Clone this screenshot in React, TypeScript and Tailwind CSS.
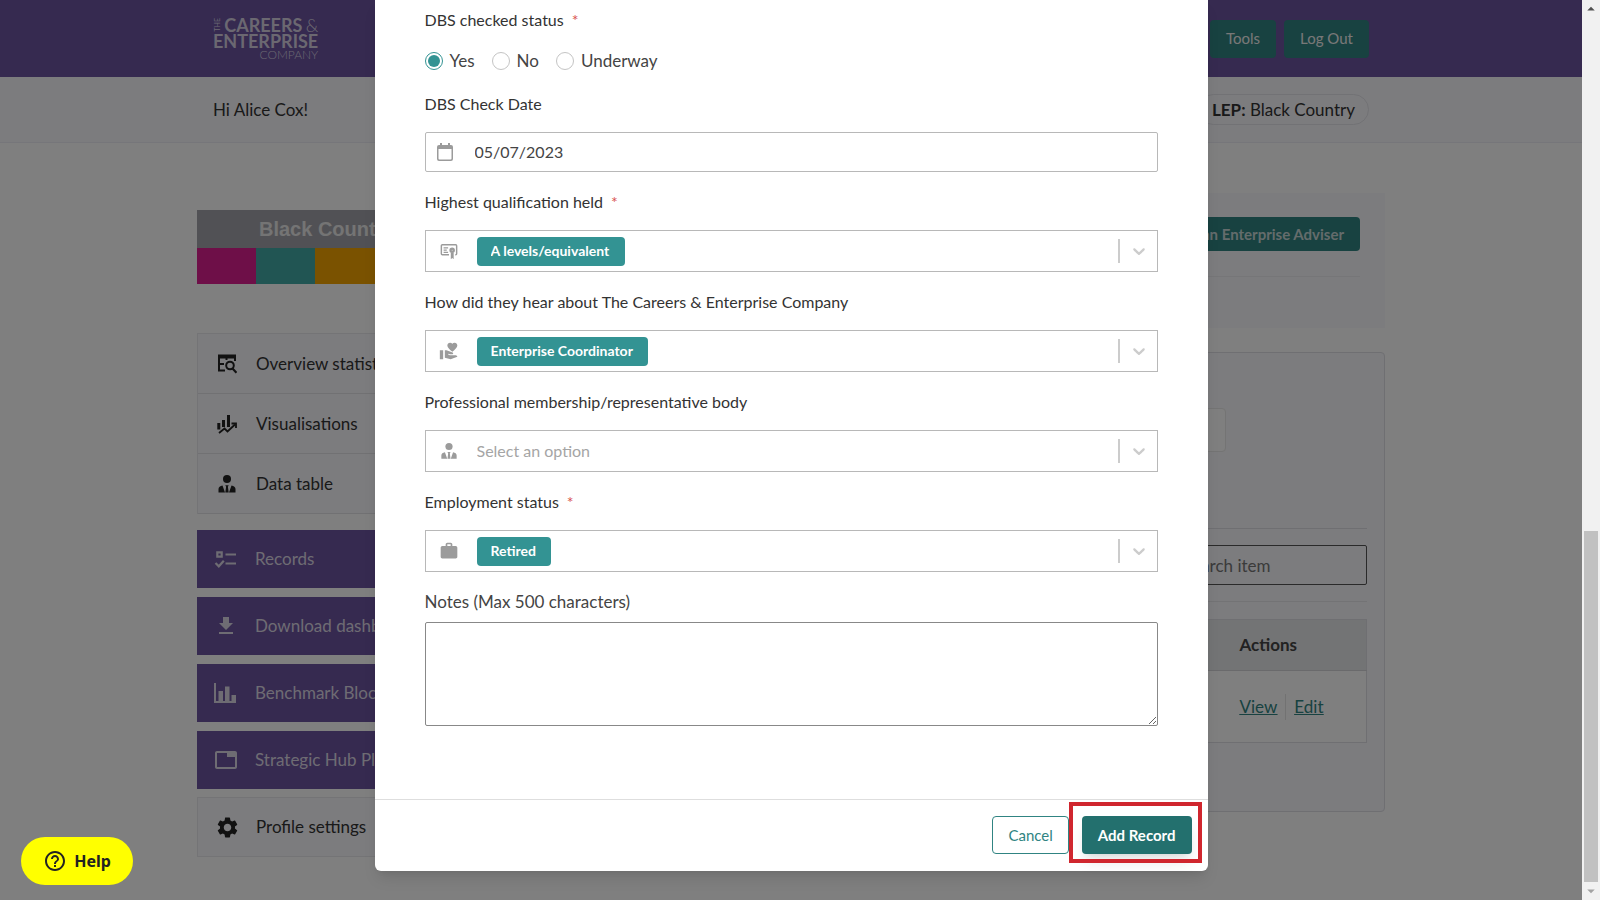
import { useState } from "react";
import type { ReactNode } from "react";
import {
  MdArrowDropDown,
  MdArrowDropUp,
  MdDownload,
  MdHelpOutline,
  MdSettings,
  MdTab,
  MdVolunteerActivism,
  MdWork,
} from "react-icons/md";

interface IconProps {
  className?: string;
}

function PersonTieIcon({ className }: IconProps) {
  return (
    <svg viewBox="0 0 20 20" fill="currentColor" className={className} aria-hidden="true">
      <circle cx="10" cy="5" r="4" />
      <path d="M5.5 11.5 8 18.5H1.5V15c0-2 1.6-3.1 4-3.5ZM14.5 11.5 12 18.5h6.500V15c0-2-1.600-3.100-4-3.500Z" />
      <path d="M8.300 11.200h3.400l-.8 1.600.8 5.700H8.300l.8-5.700Z" />
    </svg>
  );
}

function TableSearchIcon({ className }: IconProps) {
  return (
    <svg viewBox="0 0 20 20" fill="none" stroke="currentColor" strokeWidth="2" className={className} aria-hidden="true">
      <path d="M1 2.500h18" strokeWidth="4" />
      <path d="M2 3v13.500h6M2 10h5M18 3v4M9.500 3v3" />
      <circle cx="13" cy="11.500" r="3.800" />
      <path d="m15.500 14.500 4 4.200" strokeWidth="2.200" />
    </svg>
  );
}

function TrendIcon({ className }: IconProps) {
  return (
    <svg viewBox="0 0 20 20" fill="none" stroke="currentColor" className={className} aria-hidden="true">
      <path d="M1.800 9v6.500M6.500 6v7M11.500 1v12" strokeWidth="3" />
      <path d="m2 19 5.500-4.500 3 3L18 10.500" strokeWidth="1.800" />
      <path d="M14.500 9.500H19V14" strokeWidth="1.800" />
    </svg>
  );
}

function TaskListIcon({ className }: IconProps) {
  return (
    <svg viewBox="0 0 24 24" fill="none" stroke="currentColor" strokeWidth="2.200" className={className} aria-hidden="true">
      <path d="M3.300 5.300h4.400v4.400H3.300ZM11.500 7.500H22M11.500 16.500H22" />
      <path d="m1.500 16 3.300 3.300 5-5.500" />
    </svg>
  );
}

function BarAxisIcon({ className }: IconProps) {
  return (
    <svg viewBox="0 0 22 22" fill="currentColor" className={className} aria-hidden="true">
      <path d="M0 1h2v18h20v2H0ZM4.500 9H9v11H4.500ZM11 4.500h4.500V20H11ZM17.500 13H22v7h-4.500Z" />
    </svg>
  );
}

function CalendarIcon({ className }: IconProps) {
  return (
    <svg viewBox="0 0 16 18" fill="currentColor" className={className} aria-hidden="true">
      <path d="M2 2h1V0h2v2h6V0h2v2h1a2 2 0 0 1 2 2v12a2 2 0 0 1-2 2H2a2 2 0 0 1-2-2V4a2 2 0 0 1 2-2Zm-.500 4v9.500a1 1 0 0 0 1 1h11a1 1 0 0 0 1-1V6Z" />
    </svg>
  );
}

function CertificateIcon({ className }: IconProps) {
  return (
    <svg viewBox="0 0 20 18" fill="none" stroke="currentColor" className={className} aria-hidden="true">
      <path d="M10 13H2.500A1 1 0 0 1 1.500 12V3a1 1 0 0 1 1-1h15a1 1 0 0 1 1 1v9a1 1 0 0 1-1 1H17" strokeWidth="1.600" />
      <path d="M4 5.500h5M4 8h3.500M4 10.500h5" strokeWidth="1.300" />
      <circle cx="13.500" cy="8" r="1.800" strokeWidth="2.600" />
      <path d="M12 10.500h3.200V18l-1.600-1.200L12 18Z" fill="currentColor" stroke="none" />
    </svg>
  );
}

function ChevronIcon({ className }: IconProps) {
  return (
    <svg viewBox="0 0 20 20" fill="currentColor" className={className} aria-hidden="true">
      <path d="M4.516 7.548c0.436-0.446 1.043-0.481 1.576 0l3.908 3.747 3.908-3.747c0.533-0.481 1.141-0.446 1.574 0 0.436 0.445 0.408 1.197 0 1.615-0.406 0.418-4.695 4.502-4.695 4.502-0.217 0.223-0.502 0.335-0.787 0.335s-0.570-0.112-0.789-0.335c0 0-4.287-4.084-4.695-4.502s-0.436-1.170 0-1.615z" />
    </svg>
  );
}

function Logo() {
  return (
    <a href="#home" aria-label="The Careers & Enterprise Company" className="flex flex-col text-[#d6d0e2]">
      <span className="flex h-4 items-center justify-between">
        <span className="rotate-180 text-[7px] leading-[8px] [writing-mode:vertical-rl]">THE</span>
        <span className="text-lg leading-4 font-bold">CAREERS</span>
        <span className="text-lg leading-4 font-light">&amp;</span>
      </span>
      <span className="text-lg leading-4 font-bold">ENTERPRISE</span>
      <span className="self-end text-xs leading-3 font-light">COMPANY</span>
    </a>
  );
}

function Header() {
  return (
    <header className="bg-[#6c54a0]">
      <div className="mx-auto flex h-[77px] max-w-[1188px] items-center justify-between px-4">
        <Logo />
        <nav className="flex gap-2">
          <button className="h-[38px] rounded bg-[#308482] px-4 text-[15px] text-[#f0f0f0]">Tools</button>
          <button className="h-[38px] rounded bg-[#308482] px-4 text-[15px] text-[#f0f0f0]">Log Out</button>
        </nav>
      </div>
    </header>
  );
}

function UserBar() {
  return (
    <div className="border-b border-[#ececf4] bg-[#f8f8fc]">
      <div className="mx-auto flex h-[65px] max-w-[1188px] items-center justify-between px-4 text-[17px] text-[#333]">
        <span>Hi Alice Cox!</span>
        <span className="rounded-full border border-[#e4e4ea] px-[13px] py-[2px]">
          <b>LEP:</b> Black Country
        </span>
      </div>
    </div>
  );
}

interface NavItem {
  label: string;
  icon: ReactNode;
}

const reportItems: NavItem[] = [
  { label: "Overview statistics", icon: <TableSearchIcon className="size-5" /> },
  { label: "Visualisations", icon: <TrendIcon className="size-5" /> },
  { label: "Data table", icon: <PersonTieIcon className="size-5" /> },
];

const actionItems: NavItem[] = [
  { label: "Records", icon: <TaskListIcon className="size-6" /> },
  { label: "Download dashboard", icon: <MdDownload className="size-6" /> },
  { label: "Benchmark Block", icon: <BarAxisIcon className="size-[22px]" /> },
  { label: "Strategic Hub Plan", icon: <MdTab className="size-6" /> },
];

function Sidebar() {
  return (
    <aside className="w-[295px] shrink-0 pt-[67px] text-[17px] whitespace-nowrap">
      <div>
        <div className="flex h-[38px] items-center bg-[#a3a3aa] pl-[62px] font-['Liberation_Sans',sans-serif] text-xl font-bold text-[#e8e8e8]">
          Black Country LEP
        </div>
        <div className="grid h-9 grid-cols-5">
          <div className="bg-[#dc1e90]" />
          <div className="bg-[#42aaa6]" />
          <div className="bg-[#f4a400]" />
          <div className="bg-[#f4a400]" />
          <div className="bg-[#308482]" />
        </div>
      </div>
      <nav className="mt-[49px]">
        <div className="border border-b-0 border-[#e8e8ec] bg-[#f8f8fc] text-[#333]">
          {reportItems.map((item) => (
            <a key={item.label} href="#reports" className="flex h-[60px] items-center border-b border-[#e2e2e6] pl-[19px]">
              <span className="flex w-[39px] text-[#222]">{item.icon}</span>
              {item.label}
            </a>
          ))}
        </div>
        <div className="mt-4 flex flex-col gap-[9px]">
          {actionItems.map((item) => (
            <a key={item.label} href="#actions" className="flex h-[58px] items-center bg-[#6c54a0] pl-[17px] text-[#ddd8e6]">
              <span className="flex w-[41px]">{item.icon}</span>
              {item.label}
            </a>
          ))}
        </div>
        <a href="#profile" className="mt-2 flex h-[60px] items-center border border-[#e8e8ec] bg-[#f8f8fc] pl-[17px] text-[#333]">
          <span className="flex w-[41px] text-[#222]">
            <MdSettings className="size-[25px]" />
          </span>
          Profile settings
        </a>
      </nav>
    </aside>
  );
}

function RecordsPanel() {
  return (
    <main className="min-w-0 flex-1 pt-[50px] text-[#444]">
      <section className="h-[135px] bg-[#f8f8fc] px-[25px] pt-6">
        <div className="flex justify-end border-b border-[#ececf0] pb-[25px]">
          <button className="h-[34px] rounded-sm bg-[#308482] px-4 text-[15px] font-bold text-[#c8d8d8]">
            Create an Enterprise Adviser
          </button>
        </div>
      </section>
      <section className="mt-6 h-[460px] rounded-sm border border-[#dedee4] bg-[#f8f8fc] px-[17px] pt-[55px]">
        <div className="h-[121px] border-b border-[#dedee4] pr-[141px]">
          <input aria-label="Filter" className="h-11 w-full rounded border border-[#e8e8e8] bg-white px-3" />
        </div>
        <div className="flex justify-end border-b border-[#e6e6ea] py-4">
          <input
            type="search"
            aria-label="Search item"
            placeholder="Search item"
            className="h-10 w-[220px] rounded-xs border border-[#555] px-3 pl-[35px] text-[17px] placeholder:text-[#777]"
          />
        </div>
        <table className="mt-[17px] w-full border border-[#dedee4] bg-white text-left text-[17px]">
          <thead>
            <tr className="h-[51px] border-b border-[#d4d4d8] bg-[#e7e8ea]">
              <th className="px-4 font-bold">Name</th>
              <th className="w-[143px] px-4 font-bold">Actions</th>
            </tr>
          </thead>
          <tbody>
            <tr className="h-[72px]">
              <td className="px-4">Record</td>
              <td className="px-4">
                <div className="flex items-center text-[#308482] underline">
                  <a href="#view">View</a>
                  <span className="mx-2 h-[26px] border-l border-[#e4e4e4]" />
                  <a href="#edit">Edit</a>
                </div>
              </td>
            </tr>
          </tbody>
        </table>
      </section>
    </main>
  );
}

function FieldLabel({ htmlFor, required, children }: { htmlFor: string; required?: boolean; children: ReactNode }) {
  return (
    <label htmlFor={htmlFor} className="block h-6 text-base leading-6 text-[#333]">
      {children}
      {required && <span className="ml-2 text-[#d9534f]">*</span>}
    </label>
  );
}

interface SelectFieldProps {
  id: string;
  label: string;
  icon: ReactNode;
  value?: string;
  required?: boolean;
}

function SelectField({ id, label, icon, value, required }: SelectFieldProps) {
  return (
    <div>
      <FieldLabel htmlFor={id} required={required}>
        {label}
      </FieldLabel>
      <div className="mt-4 flex h-[42px] items-center border border-[#b8b8b8]">
        <span className="flex w-[51px] justify-center pr-1 text-[#9b9b9b]">{icon}</span>
        {value ? (
          <select id={id} className="h-[29px] appearance-none rounded bg-[#339393] px-[14px] text-sm font-bold text-white">
            <option>{value}</option>
          </select>
        ) : (
          <select id={id} className="h-[29px] appearance-none text-base text-[#a5a5a5]">
            <option>Select an option</option>
          </select>
        )}
        <span className="ml-auto h-6 w-[2px] bg-[#ccc]" />
        <ChevronIcon className="mr-2 ml-[9px] size-5 text-[#ccc]" />
      </div>
    </div>
  );
}

function RecordModal() {
  const [status, setStatus] = useState("Yes");

  return (
    <div role="dialog" aria-label="Add record" className="mx-auto w-full max-w-[833px] rounded-b-md bg-white shadow-lg">
      <form className="flex flex-col gap-[18px] px-[50px] pt-2 pb-[73px] text-[#444]">
        <fieldset>
          <legend className="h-6 text-base leading-6 text-[#333]">
            DBS checked status<span className="ml-2 text-[#d9534f]">*</span>
          </legend>
          <div className="mt-4 flex h-[26px] items-center gap-[17px] text-[17px]">
            {["Yes", "No", "Underway"].map((option) => (
              <label key={option} className="flex items-center gap-[7px]">
                <input
                  type="radio"
                  name="dbs-status"
                  checked={status === option}
                  onChange={() => setStatus(option)}
                  className="size-[18px] appearance-none rounded-full border border-[#c4c4c4] bg-clip-content p-[2px] checked:border-[#339393] checked:bg-[#339393]"
                />
                {option}
              </label>
            ))}
          </div>
        </fieldset>
        <div>
          <FieldLabel htmlFor="dbs-date">DBS Check Date</FieldLabel>
          <div className="mt-4 flex h-10 items-center rounded-xs border border-[#b8b8b8]">
            <CalendarIcon className="mr-[22px] ml-[11px] h-[18px] w-4 text-[#9b9b9b]" />
            <input id="dbs-date" defaultValue="05/07/2023" className="flex-1 text-base outline-none" />
          </div>
        </div>
        <SelectField
          id="qualification"
          label="Highest qualification held"
          icon={<CertificateIcon className="w-[18px]" />}
          value="A levels/equivalent"
          required
        />
        <SelectField
          id="hear-about"
          label="How did they hear about The Careers & Enterprise Company"
          icon={<MdVolunteerActivism className="size-5" />}
          value="Enterprise Coordinator"
        />
        <SelectField
          id="membership"
          label="Professional membership/representative body"
          icon={<PersonTieIcon className="size-[18px]" />}
        />
        <SelectField id="employment" label="Employment status" icon={<MdWork className="size-5" />} value="Retired" required />
        <div>
          <label htmlFor="notes" className="block h-6 text-[17px] leading-6">
            Notes (Max 500 characters)
          </label>
          <textarea id="notes" className="mt-2 block h-[104px] w-full rounded-xs border border-[#888] p-3" />
        </div>
      </form>
      <div className="flex justify-end gap-[13px] border-t border-[#dedede] px-4 pt-4 pb-[17px] text-[15px]">
        <button className="h-[38px] rounded-sm border border-[#308482] px-[15px] text-[#308482]">Cancel</button>
        <div className="relative">
          <button className="h-[38px] rounded-sm bg-[#23706e] px-4 font-bold text-white shadow-lg">Add Record</button>
          <div className="pointer-events-none absolute -top-[14px] -right-[10px] -bottom-[9px] -left-[13px] border-4 border-[#d0262e]" />
        </div>
      </div>
    </div>
  );
}

function ScrollTrack() {
  return (
    <div aria-hidden="true" className="flex w-[18px] shrink-0 flex-col items-center justify-between bg-[#f1f1f1]">
      <MdArrowDropUp className="size-[18px] text-[#505050]" />
      <div className="mt-auto h-[351px] w-[14px] bg-[#c1c1c1]" />
      <MdArrowDropDown className="size-[18px] text-[#a3a3a3]" />
    </div>
  );
}

export default function App() {
  return (
    <div className="flex h-screen font-[Lato,sans-serif]">
      <div className="relative min-w-0 flex-1 overflow-hidden bg-white">
        <Header />
        <UserBar />
        <div className="mx-auto flex max-w-[1188px] gap-6">
          <Sidebar />
          <RecordsPanel />
        </div>
        <div className="absolute inset-0 bg-black/50">
          <RecordModal />
        </div>
        <button className="absolute bottom-[15px] left-[21px] flex h-12 w-28 items-center justify-center gap-[7px] rounded-full bg-[#ffff00] font-['Noto_Sans',sans-serif] text-base font-bold text-[#222]">
          <MdHelpOutline className="size-6" />
          Help
        </button>
      </div>
      <ScrollTrack />
    </div>
  );
}
